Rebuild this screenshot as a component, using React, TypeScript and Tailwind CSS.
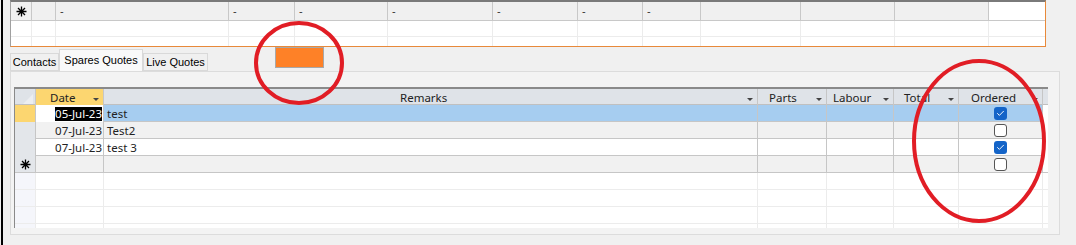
import { Check } from 'lucide-react';

const upperCols = [21, 24, 173, 66, 93, 105, 85, 65, 58, 100, 94, 94];
const dashCols = [2, 3, 4, 5, 6, 7, 8];

const lowerCols = '21px 68px 654px 69px 67px 65px 84px 6px';

interface Row {
  date: string;
  remarks: string;
  ordered: boolean;
  bg: string;
}

const rows: Row[] = [
  { date: '05-Jul-23', remarks: 'test', ordered: true, bg: 'bg-[#a6cdf0]' },
  { date: '07-Jul-23', remarks: 'Test2', ordered: false, bg: 'bg-[#f1f1f1]' },
  { date: '07-Jul-23', remarks: 'test 3', ordered: true, bg: 'bg-white' },
];

function Arrow() {
  return <span className="ml-auto mr-1 mt-1 border-x-[3px] border-t-[3px] border-x-transparent border-t-[#444]" />;
}

// new-record marker
function Star() {
  return (
    <svg width="11" height="11" viewBox="0 0 11 11" stroke="#000" strokeWidth="1.3">
      <path d="M5.5 0.5v10M0.5 5.5h10M2 2l7 7M9 2l-7 7" />
    </svg>
  );
}

function Box({ checked }: { checked: boolean }) {
  return checked ? (
    <div className="size-[13px] rounded-[3px] bg-[#1464c8] flex items-center justify-center">
      <Check className="size-[9px] text-white" strokeWidth={2.5} />
    </div>
  ) : (
    <div className="size-[13px] rounded-[3px] border border-[#555] bg-white" />
  );
}

function UpperTable() {
  return (
    <div className="ml-[7px] w-[1036px] h-[47px] border-t-2 border-t-[#7a7a7a] border-l border-l-[#a0a0a0] border-r border-r-[#e8893a] border-b border-b-[#e8893a] bg-white overflow-hidden">
      <div className="flex h-[19px] border-b border-[#c8c8c8]">
        {upperCols.map((w, i) => (
          <div
            key={i}
            style={{ width: w }}
            className={`shrink-0 h-full bg-[#f0f0f0] border-r border-[#c8c8c8] flex items-center text-[11px] text-[#333] ${i === 0 ? 'justify-center' : 'pl-1'}`}
          >
            {i === 0 ? <Star /> : dashCols.includes(i) ? '-' : ''}
          </div>
        ))}
        <div className="flex-1 bg-white" />
      </div>
      {[16, 10].map((h, r) => (
        <div key={r} className="flex border-b border-[#ececec]" style={{ height: h }}>
          {upperCols.map((w, i) => (
            <div key={i} style={{ width: w }} className="shrink-0 h-full border-r border-[#ececec]" />
          ))}
        </div>
      ))}
    </div>
  );
}

function Tabs() {
  return (
    <div className="flex items-end h-[24px] ml-[7px] relative">
      <div className="h-[18px] w-[49px] border border-[#d9d9d9] bg-[#f0f0f0] flex items-center justify-center">Contacts</div>
      <div className="h-[22px] w-[84px] border border-b-0 border-[#d9d9d9] bg-[#f9f9f9] flex items-start pt-[2px] justify-center">Spares Quotes</div>
      <div className="h-[18px] w-[65px] border border-[#d9d9d9] bg-[#f0f0f0] flex items-center justify-center">Live Quotes</div>
      <div className="ml-[67px] mb-[3px] w-[49px] h-[21px] bg-[#fe8127] border border-[#a8a8a8]" />
    </div>
  );
}

function LowerGrid() {
  const line = 'border-r border-[#c6c6c6]';
  return (
    <div className="ml-[3px] w-[1034px] h-[141px] border-t-2 border-t-[#8a8a8a] border-l border-l-[#8a8a8a] bg-white overflow-hidden font-['Noto_Sans',sans-serif] text-[11.5px] text-[#222]">
      <div className="grid h-[16px] bg-[#dfe3e8] border-b border-[#c0c0c0]" style={{ gridTemplateColumns: lowerCols }}>
        <div className={`${line} relative overflow-hidden`}>
          <div className="absolute right-[2px] bottom-[2px] border-l-[10px] border-b-[10px] border-l-transparent border-b-[#eceef1]" />
        </div>
        <div className={`${line} bg-[#fcd670] flex items-center pl-[14px]`}>
          Date<Arrow />
        </div>
        <div className={`${line} flex items-center`}>
          <span className="ml-[296px]">Remarks</span>
          <Arrow />
        </div>
        <div className={`${line} flex items-center pl-[11px]`}>
          Parts<Arrow />
        </div>
        <div className={`${line} flex items-center pl-[6px]`}>
          Labour<Arrow />
        </div>
        <div className={`${line} flex items-center pl-[10px]`}>
          Total<Arrow />
        </div>
        <div className={`${line} flex items-center pl-[12px]`}>
          Ordered<Arrow />
        </div>
        <div />
      </div>
      {rows.map((r, i) => (
        <div key={i} className={`grid h-[17px] border-b border-[#c6c6c6] ${r.bg}`} style={{ gridTemplateColumns: lowerCols }}>
          <div className={`${line} ${i === 0 ? 'bg-[#fcd670]' : 'bg-[#e3e6ea]'}`} />
          <div className={`${line} flex items-center justify-end pr-[1px] ${i === 0 ? 'bg-white' : ''}`}>
            <span className={i === 0 ? 'bg-black text-white leading-[14px]' : ''}>{r.date}</span>
          </div>
          <div className={`${line} flex items-center pl-[3px]`}>{r.remarks}</div>
          <div className={line} />
          <div className={line} />
          <div className={line} />
          <div className={`${line} flex items-center justify-center`}>
            <Box checked={r.ordered} />
          </div>
          <div className="bg-white" />
        </div>
      ))}
      <div className="grid h-[17px] border-b border-[#c6c6c6] bg-[#f1f1f1]" style={{ gridTemplateColumns: lowerCols }}>
        <div className={`${line} bg-[#e3e6ea] flex items-center justify-center`}>
          <Star />
        </div>
        <div className={line} />
        <div className={line} />
        <div className={line} />
        <div className={line} />
        <div className={line} />
        <div className={`${line} flex items-center justify-center`}>
          <Box checked={false} />
        </div>
        <div className="bg-white" />
      </div>
      {[0, 1, 2, 3].map((k) => (
        <div key={k} className="grid h-[17px] border-b border-[#ececec]" style={{ gridTemplateColumns: lowerCols }}>
          <div className="border-r border-[#ececec] bg-[#f5f6fb]" />
          <div className="border-r border-[#ececec]" />
          <div className="border-r border-[#ececec]" />
          <div className="border-r border-[#ececec]" />
          <div className="border-r border-[#ececec]" />
          <div className="border-r border-[#ececec]" />
          <div className="border-r border-[#ececec]" />
          <div />
        </div>
      ))}
    </div>
  );
}

export default function App() {
  return (
    <div className="relative w-[1076px] h-[245px] overflow-hidden bg-[#f0f0f0] flex font-['Liberation_Sans',sans-serif] text-[11px] text-black">
      <div className="w-px shrink-0" />
      <div className="w-[2px] shrink-0 bg-black" />
      <div className="flex-1 flex flex-col">
        <UpperTable />
        <Tabs />
        <div className="ml-[7px] w-[1050px] h-[164px] border border-[#dcdcdc] bg-[#f3f3f3] pt-[15px]">
          <LowerGrid />
        </div>
      </div>
      <svg className="absolute inset-0 pointer-events-none" width="1076" height="245">
        <ellipse cx="299" cy="63" rx="43" ry="40" fill="none" stroke="#e11d25" strokeWidth="4" />
        <ellipse cx="979" cy="141" rx="65" ry="80" fill="none" stroke="#e11d25" strokeWidth="4" />
      </svg>
    </div>
  );
}
